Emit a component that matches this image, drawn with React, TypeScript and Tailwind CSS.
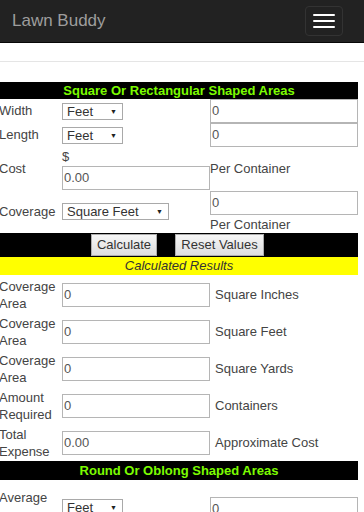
import React from "react";

const font = { fontFamily: '"Liberation Sans", Arial, sans-serif' };

function Select({ value, width }: { value: string; width: string }) {
  return (
    <div
      className={`flex items-center justify-between h-[17px] border border-[#a9a9a9] bg-white pl-[4px] pr-[5px] text-[13px] leading-none text-[#333] ${width}`}
    >
      <span>{value}</span>
      <span className="text-[7px] text-[#222]">▼</span>
    </div>
  );
}

function TextBox({ value, className }: { value: string; className: string }) {
  return (
    <div
      className={`flex items-center border border-[#b5b5b5] bg-white pl-[1px] text-[13px] text-[#555] ${className}`}
    >
      {value}
    </div>
  );
}

function ResultRow({ label, value, unit }: { label: string; value: string; unit: string }) {
  return (
    <div className="flex h-[37px] items-center">
      <div className="w-[63px] -ml-[1px] text-[13px] leading-[17px] text-[#444]">{label}</div>
      <TextBox value={value} className="w-[148px] h-[24px]" />
      <div className="pl-[5px] text-[13px] text-[#444]">{unit}</div>
    </div>
  );
}

export default function App() {
  return (
    <div className="w-[364px] h-[512px] overflow-hidden bg-white" style={font}>
      {/* navbar */}
      <div className="flex h-[43px] items-center justify-between border-b border-[#080808] bg-[#222] pl-[12px] pr-[21px]">
        <span className="text-[17px] text-[#9d9d9d]">Lawn Buddy</span>
        <div className="flex h-[30px] w-[38px] flex-col items-center justify-center gap-[4px] rounded-[4px] border border-[#333]">
          <span className="block h-[2px] w-[22px] rounded-[1px] bg-white" />
          <span className="block h-[2px] w-[22px] rounded-[1px] bg-white" />
          <span className="block h-[2px] w-[22px] rounded-[1px] bg-white" />
        </div>
      </div>
      <div className="h-[19px] border-b border-[#e5e5e5]" />

      <div className="mt-[20px] w-[358px]">
        <div className="bg-black text-center text-[13px] font-bold leading-[17px] text-[#7cfc00]">
          Square Or Rectangular Shaped Areas
        </div>

        {/* width */}
        <div className="flex h-[24px] items-center">
          <div className="w-[63px] -ml-[1px] text-[13px] text-[#444]">Width</div>
          <div className="w-[148px]">
            <Select value="Feet" width="w-[61px]" />
          </div>
          <TextBox value="0" className="flex-1 h-[24px]" />
        </div>
        {/* length */}
        <div className="flex h-[24px] items-center">
          <div className="w-[63px] -ml-[1px] text-[13px] text-[#444]">Length</div>
          <div className="w-[148px]">
            <Select value="Feet" width="w-[61px]" />
          </div>
          <TextBox value="0" className="flex-1 h-[24px]" />
        </div>
        {/* cost */}
        <div className="flex h-[43px] items-center">
          <div className="w-[63px] -ml-[1px] pt-[1px] text-[13px] text-[#444]">Cost</div>
          <div className="w-[148px] flex flex-col">
            <span className="h-[19px] pt-[2px] text-[13px] leading-[15px] text-[#444]">$</span>
            <TextBox value="0.00" className="w-[148px] h-[24px]" />
          </div>
          <div className="text-[13px] text-[#444] pt-[1px]">Per Container</div>
        </div>
        {/* coverage */}
        <div className="flex h-[43px] items-center">
          <div className="w-[63px] -ml-[1px] text-[13px] text-[#444]">Coverage</div>
          <div className="w-[148px]">
            <Select value="Square Feet" width="w-[107px]" />
          </div>
          <div className="flex flex-1 flex-col">
            <TextBox value="0" className="w-full h-[24px]" />
            <span className="pt-[1px] text-[13px] leading-[17px] text-[#444]">Per Container</span>
          </div>
        </div>

        {/* buttons */}
        <div className="flex h-[24px] items-center justify-center gap-[18px] bg-black pr-[3px]">
          <div className="flex h-[22px] w-[66px] items-center justify-center border border-[#adadad] bg-gradient-to-b from-[#f6f6f6] to-[#dedede] text-[13px] text-[#333]">
            Calculate
          </div>
          <div className="flex h-[22px] w-[89px] items-center justify-center border border-[#adadad] bg-gradient-to-b from-[#f6f6f6] to-[#dedede] text-[13px] text-[#333]">
            Reset Values
          </div>
        </div>
        <div className="h-[18px] bg-[#ffff00] text-center text-[13px] italic leading-[18px] text-[#333]">
          Calculated Results
        </div>

        <div className="pt-[1px]">
          <ResultRow label="Coverage Area" value="0" unit="Square Inches" />
          <ResultRow label="Coverage Area" value="0" unit="Square Feet" />
          <ResultRow label="Coverage Area" value="0" unit="Square Yards" />
          <ResultRow label="Amount Required" value="0" unit="Containers" />
          <ResultRow label="Total Expense" value="0.00" unit="Approximate Cost" />
        </div>

        <div className="h-[19px] bg-black text-center text-[13px] font-bold leading-[19px] text-[#7cfc00]">
          Round Or Oblong Shaped Areas
        </div>

        <div className="flex h-[40px] items-start pt-[8px]">
          <div className="w-[63px] -ml-[1px] text-[13px] text-[#444]">Average</div>
          <div className="w-[148px] pt-[11px]">
            <Select value="Feet" width="w-[61px]" />
          </div>
          <TextBox value="0" className="flex-1 h-[24px] mt-[9px]" />
        </div>
      </div>
    </div>
  );
}
